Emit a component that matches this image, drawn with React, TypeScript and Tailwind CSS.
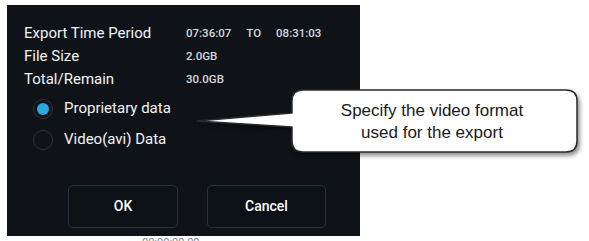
const rows = [
  { label: 'Export Time Period', value: ['07:36:07', 'TO', '08:31:03'] },
  { label: 'File Size', value: ['2.0GB'] },
  { label: 'Total/Remain', value: ['30.0GB'] },
];

const options = [
  { label: 'Proprietary data', checked: true },
  { label: 'Video(avi) Data', checked: false },
];

function Radio({ checked }: { checked: boolean }) {
  return (
    <span className="w-[20px] h-[20px] rounded-full border-[1.5px] border-[#2c333b] flex items-center justify-center">
      {checked && <span className="w-[12px] h-[12px] rounded-full bg-[#2aa8e4]" />}
    </span>
  );
}

export default function App() {
  return (
    <div className="relative w-[589px] h-[241px] bg-white overflow-hidden font-['Roboto',sans-serif]">
      <div className="pt-[5px] pl-[7px]">
        <div className="w-[353px] h-[231px] bg-[#0f1318] flex flex-col pt-[17px] pb-[8px]">
          <div className="flex flex-col pl-[17px]">
            {rows.map((row) => (
              <div key={row.label} className="h-[23px] flex items-center">
                <span className="w-[162px] text-[15px] text-[#f2f4f6]">{row.label}</span>
                <span className="flex items-center gap-[15px] text-[11.5px] font-medium text-[#d6dade]">
                  {row.value.map((v) => (
                    <span key={v}>{v}</span>
                  ))}
                </span>
              </div>
            ))}
          </div>

          <div className="flex flex-col pl-[26px] mt-[2px]">
            {options.map((o) => (
              <div key={o.label} className="h-[31px] flex items-center gap-[11px]">
                <Radio checked={o.checked} />
                <span className="text-[15px] text-[#f2f4f6]">{o.label}</span>
              </div>
            ))}
          </div>

          <div className="mt-auto flex pl-[61px] gap-[29px]">
            <button className="w-[110px] h-[43px] rounded-[5px] border border-[#25333f] bg-[#0c1116] text-[14px] font-medium text-white">
              OK
            </button>
            <button className="w-[119px] h-[43px] rounded-[5px] border border-[#25333f] bg-[#0c1116] text-[14px] font-medium text-white">
              Cancel
            </button>
          </div>
        </div>
        <div className="ml-[135px] text-[11px] leading-[14px] text-[#8a8a8a]">00:00:00 00</div>
      </div>

      {/* callout */}
      <svg
        className="absolute left-0 top-0 drop-shadow-[2px_3px_2px_rgba(0,0,0,0.45)]"
        width="589"
        height="241"
        viewBox="0 0 589 241"
      >
        <path
          d="M303 90 H566 Q577 90 577 101 V141 Q577 152 566 152 H303 Q292 152 292 141 V127 L197 121 L292 113 V101 Q292 90 303 90 Z"
          fill="#ffffff"
          stroke="#2b2b2b"
          strokeWidth="1.5"
          strokeLinejoin="round"
        />
      </svg>
      <div className="absolute left-[292px] top-[90px] w-[280px] h-[62px] flex flex-col items-center justify-center pt-[1px] text-[17px] leading-[22px] text-[#1a1a1a] font-['Liberation_Sans',Arial,sans-serif]">
        <span>Specify the video format</span>
        <span>used for the export</span>
      </div>
    </div>
  );
}
